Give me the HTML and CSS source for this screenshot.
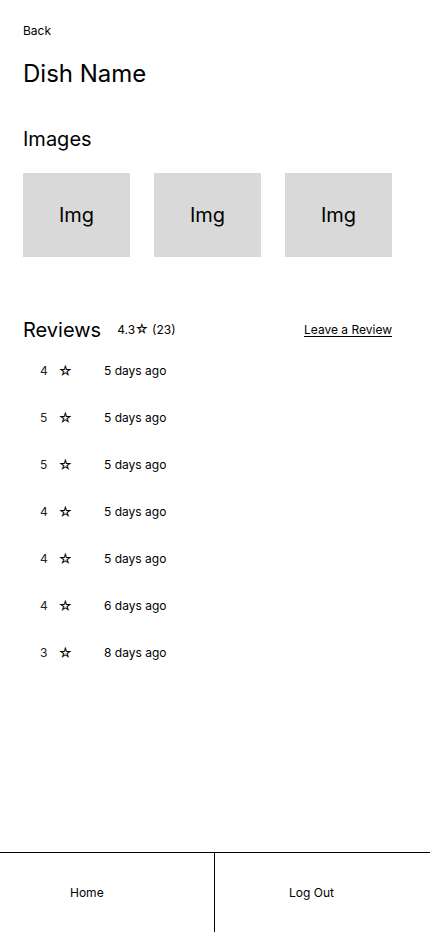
FILE: index.html
```html
<!DOCTYPE html>
<html lang="en">
<head>
<meta charset="utf-8">
<title>Dish Name</title>
<link rel="stylesheet" href="styles.css">
</head>
<body>
<div class="page">
  <main class="content">
    <a class="back" href="#">Back</a>
    <h1 class="title">Dish Name</h1>
    <h2 class="section-title">Images</h2>
    <div class="images">
      <div class="img-box">Img</div>
      <div class="img-box">Img</div>
      <div class="img-box">Img</div>
    </div>
    <div class="reviews-head">
      <h2 class="reviews-title">Reviews</h2>
      <span class="rating">4.3<span class="star">☆</span> (23)</span>
      <a class="leave" href="#">Leave a Review</a>
    </div>
    <ul class="review-list">
      <li class="review"><span class="num">4</span><span class="star">☆</span><span class="date">5 days ago</span></li>
      <li class="review"><span class="num">5</span><span class="star">☆</span><span class="date">5 days ago</span></li>
      <li class="review"><span class="num">5</span><span class="star">☆</span><span class="date">5 days ago</span></li>
      <li class="review"><span class="num">4</span><span class="star">☆</span><span class="date">5 days ago</span></li>
      <li class="review"><span class="num">4</span><span class="star">☆</span><span class="date">5 days ago</span></li>
      <li class="review"><span class="num">4</span><span class="star">☆</span><span class="date">6 days ago</span></li>
      <li class="review"><span class="num">3</span><span class="star">☆</span><span class="date">8 days ago</span></li>
    </ul>
  </main>
  <nav class="bottom-nav">
    <a class="nav-item nav-home" href="#">Home</a>
    <a class="nav-item nav-logout" href="#">Log Out</a>
  </nav>
</div>
</body>
</html>
```
FILE: styles.css
```css
* { box-sizing: border-box; }
html, body { margin: 0; padding: 0; }
body {
  font-family: Inter, "Liberation Sans", sans-serif;
  color: #000;
  background: #fff;
}
a { color: inherit; text-decoration: none; }
.page {
  min-height: 932px;
  display: flex;
  flex-direction: column;
}
.content {
  flex: 1;
  padding: 23px 38px 0 23px;
}
.back {
  display: block;
  font-size: 12px;
  line-height: 16px;
}
.title {
  margin: 20px 0 0;
  font-size: 24px;
  line-height: 30px;
  font-weight: 400;
}
.section-title {
  margin: 38px 0 0;
  font-size: 20px;
  line-height: 24px;
  font-weight: 400;
}
.images {
  margin-top: 22px;
  display: flex;
  gap: 24px;
}
.img-box {
  width: 107px;
  height: 84px;
  background: #d9d9d9;
  display: flex;
  align-items: center;
  justify-content: center;
  font-size: 20px;
}
.reviews-head {
  margin-top: 61px;
  display: flex;
  align-items: center;
  height: 24px;
}
.reviews-title {
  margin: 0;
  font-size: 20px;
  line-height: 24px;
  font-weight: 400;
}
.rating {
  margin-left: 16px;
  font-size: 12px;
  line-height: 16px;
  position: relative;
  top: -1px;
}
.rating .star { font-size: 13px; }
.leave {
  margin-left: auto;
  font-size: 12px;
  line-height: 16px;
  text-decoration: underline;
  text-underline-offset: 2px;
}
.review-list {
  list-style: none;
  margin: 5px 0 0;
  padding: 0 0 0 17px;
}
.review {
  height: 47px;
  display: flex;
  align-items: center;
  font-size: 12px;
}
.num {
  width: 18px;
  color: #222;
}
.review .star {
  width: 46px;
  font-size: 14px;
}
.bottom-nav {
  height: 80px;
  border-top: 1px solid #000;
  display: flex;
}
.nav-item {
  display: flex;
  align-items: center;
  font-size: 12px;
}
.nav-home {
  width: 215px;
  border-right: 1px solid #000;
  padding-left: 70px;
}
.nav-logout {
  flex: 1;
  padding-left: 74px;
}
```
